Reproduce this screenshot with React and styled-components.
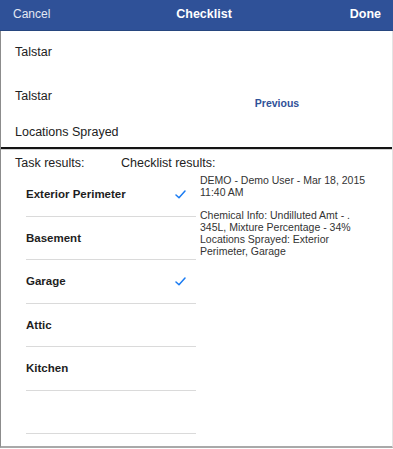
import React from 'react'
import styled, { createGlobalStyle } from 'styled-components'

const GlobalStyle = createGlobalStyle`
    body {
        margin: 0;
        background: #ffffff;
        font-family: "Liberation Sans", Arial, sans-serif;
    }
`

const tasks = [
    { name: 'Exterior Perimeter', done: true },
    { name: 'Basement', done: false },
    { name: 'Garage', done: true },
    { name: 'Attic', done: false },
    { name: 'Kitchen', done: false },
    { name: '', done: false },
]

const Check = () => (
    <svg width="11" height="9" viewBox="0 0 11 9">
        <path d="M1 5 L4 7.8 L10 1" fill="none" stroke="#1b7cf2" strokeWidth="1.5" strokeLinecap="round" strokeLinejoin="round" />
    </svg>
)

const App = () => {
    return (
        <Page>
            <GlobalStyle />
            <Header>
                <HeaderButton>Cancel</HeaderButton>
                <Title>Checklist</Title>
                <HeaderButton $bold>Done</HeaderButton>
            </Header>
            <Panel>
                <TopSection>
                    <InfoRow $height={42}>Talstar</InfoRow>
                    <InfoRow $height={46}>
                        <span>Talstar</span>
                        <PrevButton>Previous</PrevButton>
                    </InfoRow>
                    <InfoRow $height={26}>Locations Sprayed</InfoRow>
                </TopSection>
                <Separator />
                <Results>
                    <ResultsHeader>
                        <span>Task results:</span>
                        <span>Checklist results:</span>
                    </ResultsHeader>
                    <Columns>
                        <TaskList>
                            {tasks.map((t, i) => (
                                <TaskRow key={i}>
                                    <span>{t.name}</span>
                                    {t.done && <Check />}
                                </TaskRow>
                            ))}
                        </TaskList>
                        <Notes>
                            <p>DEMO - Demo User - Mar 18, 2015<br />11:40 AM</p>
                            <p>
                                Chemical Info: Undilluted Amt - .<br />
                                345L, Mixture Percentage - 34%<br />
                                Locations Sprayed: Exterior<br />
                                Perimeter, Garage
                            </p>
                        </Notes>
                    </Columns>
                </Results>
            </Panel>
        </Page>
    )
}

export default App

const Page = styled.div`
    width: 393px;
    height: 449px;
    display: flex;
    flex-direction: column;
    overflow: hidden;
`

const Header = styled.div`
    height: 31px;
    flex-shrink: 0;
    background: #2f5198;
    display: flex;
    align-items: center;
    justify-content: space-between;
    padding: 0 12px 2px 13px;
    box-sizing: border-box;
    border-bottom: 1px solid #27467f;
`

const HeaderButton = styled.span`
    color: ${p => (p.$bold ? '#ffffff' : '#e3e8f3')};
    font-size: ${p => (p.$bold ? 12.5 : 12)}px;
    font-weight: ${p => (p.$bold ? 700 : 400)};
`

const Title = styled.span`
    color: #ffffff;
    font-size: 12.5px;
    font-weight: 700;
    margin-left: 8px;
`

const Panel = styled.div`
    flex: 1;
    border-left: 1px solid #8c8c8c;
    border-right: 1px solid #e4e4e4;
    border-bottom: 2px solid #a9a9a9;
    margin-bottom: 1px;
    display: flex;
    flex-direction: column;
`

const TopSection = styled.div`
    display: flex;
    flex-direction: column;
    padding-left: 14px;
`

const InfoRow = styled.div`
    height: ${p => p.$height}px;
    display: flex;
    align-items: center;
    font-size: 12.5px;
    color: #222;
`

const PrevButton = styled.span`
    margin-left: 203px;
    margin-top: 13px;
    color: #2f5198;
    font-size: 10.5px;
    font-weight: 700;
`

const Separator = styled.div`
    margin-top: 2px;
    height: 2px;
    background: #141414;
    border-bottom: 1px solid #d0d0d0;
`

const Results = styled.div`
    display: flex;
    flex-direction: column;
`

const ResultsHeader = styled.div`
    height: 23px;
    display: flex;
    align-items: center;
    padding-left: 14px;
    padding-top: 2px;
    box-sizing: border-box;
    font-size: 12.5px;
    color: #222;

    span:first-child {
        width: 106px;
    }
`

const Columns = styled.div`
    display: flex;
`

const TaskList = styled.div`
    width: 170px;
    margin-left: 25px;
    display: flex;
    flex-direction: column;
`

const TaskRow = styled.div`
    height: 43.5px;
    box-sizing: border-box;
    border-bottom: 1.5px solid #dadada;
    display: flex;
    align-items: center;
    justify-content: space-between;
    padding-right: 10px;
    font-size: 11.5px;
    font-weight: 700;
    color: #1e1e1e;
`

const Notes = styled.div`
    margin-left: 4px;
    padding-top: 1px;
    font-size: 10.5px;
    line-height: 12px;
    color: #333;

    p {
        margin: 0 0 11px 0;
    }
`
